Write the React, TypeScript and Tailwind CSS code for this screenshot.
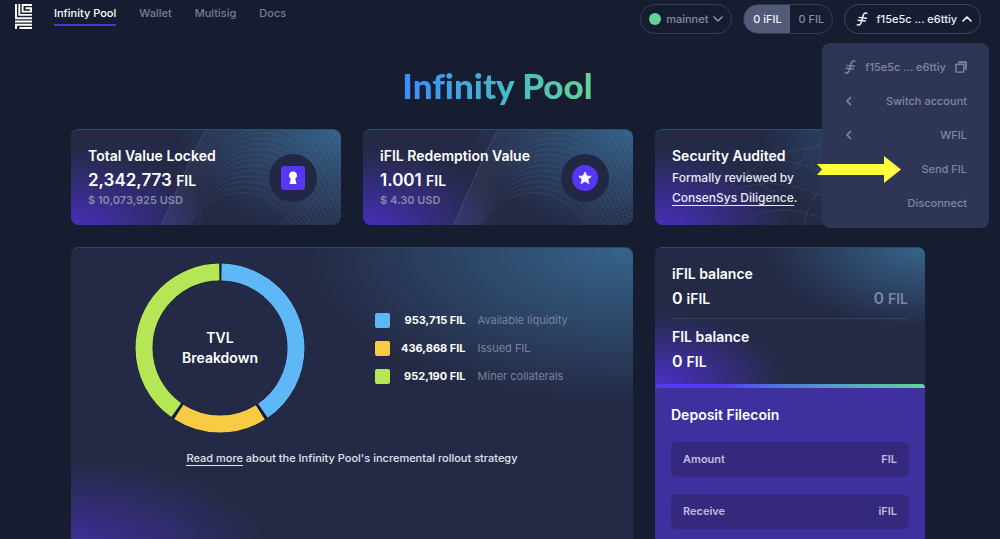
import { useId, useState, type ReactNode } from 'react'

const statBg =
  'bg-[#242a45] bg-[radial-gradient(ellipse_60%_110%_at_100%_0%,#35628a_0%,transparent_100%),radial-gradient(ellipse_50%_85%_at_0%_105%,#472fbe_0%,transparent_100%)]'
const panelBg =
  'bg-[#242a45] bg-[radial-gradient(ellipse_58%_53%_at_100%_0%,#36648b_0%,transparent_100%),radial-gradient(ellipse_35%_32%_at_0%_105%,#3f2fa0_0%,transparent_100%)]'
const balanceBg =
  'bg-[#242a45] bg-[radial-gradient(ellipse_58%_58%_at_100%_0%,#36648b_0%,transparent_100%),radial-gradient(ellipse_48%_52%_at_0%_100%,#4a30c8_0%,transparent_100%)]'

const navItems = ['Infinity Pool', 'Wallet', 'Multisig', 'Docs']

const breakdown = [
  { value: 953715, label: 'Available liquidity', color: '#5db8f5', swatch: 'bg-[#5db8f5]' },
  { value: 436868, label: 'Issued FIL', color: '#f9cb45', swatch: 'bg-[#f9cb45]' },
  { value: 952190, label: 'Miner collaterals', color: '#b4e655', swatch: 'bg-[#b4e655]' },
]

function Logo() {
  return (
    <svg viewBox="0 0 18 25" className="h-[25px] w-[18px]" fill="none" stroke="#fff" strokeWidth="1.9" aria-hidden="true">
      <path d="M1 0V14.2H17" />
      <path d="M4.3 0V10.9H17M17 1H7.6V7.6H16V4.3H10.5" />
      <path d="M0 17.5H17M1 25V20.8H17M4.5 24H17" />
    </svg>
  )
}

function FilecoinGlyph() {
  return (
    <svg viewBox="0 0 12 14" className="h-[14px] w-3 shrink-0" fill="none" stroke="currentColor" strokeWidth="1.5" strokeLinecap="round" aria-hidden="true">
      <path d="M10.8 1.2C8.8.4 7.6 1.5 7.1 3.8L5.2 10.4C4.7 12.4 3.4 13.5 1.4 12.8" />
      <path d="M3 5.4L10.4 6.2M2 8.2L9.4 9" strokeWidth="1.4" />
    </svg>
  )
}

function Chevron({ d, className }: { d: string; className: string }) {
  return (
    <svg viewBox="0 0 10 10" className={className} fill="none" stroke="currentColor" strokeWidth="1.7" strokeLinecap="round" strokeLinejoin="round" aria-hidden="true">
      <path d={d} />
    </svg>
  )
}

function CopyIcon() {
  return (
    <svg viewBox="0 0 12 12" className="h-3 w-3 shrink-0" fill="none" stroke="currentColor" strokeWidth="1.4" strokeLinejoin="round" aria-hidden="true">
      <path d="M3.2 1.1H10.9V8.8" strokeWidth="1.8" />
      <rect x=".9" y="3.2" width="7.9" height="7.9" rx=".4" />
    </svg>
  )
}

function Waves() {
  const mix = (a: number, b: number, t: number) => a + (b - a) * t
  const crests = Array.from({ length: 24 }, (_, i) => {
    const t = i / 23
    const startX = mix(90, 116, t)
    const peakX = mix(218, 172, t)
    const peakY = mix(-62, 63, t)
    const endX = mix(330, 226, t)
    const half = (peakX - startX) / 2
    return `M${startX} 97C${startX + half * 0.55} ${mix(97, peakY, 0.5)} ${peakX - half} ${peakY} ${peakX} ${peakY}S${endX - half * 0.5} ${mix(peakY, 97, 0.6)} ${endX} 99`
  })
  const ripples = Array.from({ length: 12 }, (_, i) => `M${206 + i * 4} 98Q${232 + i * 3} ${66 + i * 3} 272 ${54 + i * 4}`)
  return (
    <svg viewBox="0 0 270 96" preserveAspectRatio="xMaxYMid slice" className="absolute inset-0 h-full w-full" fill="none" stroke="#aab6dc" strokeWidth=".5" aria-hidden="true">
      {crests.map((d, i) => (
        <path key={i} d={d} opacity={i === 0 ? 0.45 : 0.2} />
      ))}
      {ripples.map((d, i) => (
        <path key={i} d={d} opacity={0.16} />
      ))}
    </svg>
  )
}

function Globe() {
  return (
    <svg viewBox="0 0 270 96" preserveAspectRatio="xMaxYMid slice" className="absolute inset-0 h-full w-full" fill="none" stroke="#9aa5cc" strokeOpacity=".28" strokeWidth=".8" strokeDasharray="1.5 1" aria-hidden="true">
      <path d="M75 58C105 30 135 14 190 18" />
      <path d="M100 32C130 28 160 36 210 60" />
      <path d="M80 60C120 46 160 58 210 90" />
      <path d="M100 86C130 74 160 84 190 98" />
      <path d="M166 13C150 24 142 36 138 44M170 56C158 66 152 80 149 96M92 40C100 52 108 58 120 62" />
    </svg>
  )
}

function StatCard({ title, value, usd, children }: { title: string; value: string; usd: string; children: ReactNode }) {
  return (
    <section className={`relative flex h-24 items-start justify-between overflow-hidden rounded-lg border-t border-[#29506c] pr-6 pl-[17px] ${statBg}`}>
      <Waves />
      <div className="relative pt-[14px] font-semibold">
        <h2 className="text-sm leading-6 text-white">{title}</h2>
        <p className="text-[17px] leading-6 text-white">
          {value} <span className="text-sm">FIL</span>
        </p>
        <p className="text-[11px] leading-4 text-[#858aa5]">$ {usd} USD</p>
      </div>
      <div className="relative grid size-12 place-items-center self-center rounded-full bg-[#222844]">{children}</div>
    </section>
  )
}

function Donut() {
  const total = breakdown.reduce((sum, item) => sum + item.value, 0)
  const radius = 76
  const length = 2 * Math.PI * radius
  const gap = 3
  let offset = 0
  return (
    <div className="relative size-[170px] shrink-0">
      <svg viewBox="0 0 170 170" className="size-full -rotate-90" fill="none" aria-hidden="true">
        <circle cx="85" cy="85" r={radius} stroke="#171c34" strokeWidth="18" />
        {breakdown.map((item) => {
          const span = (item.value / total) * length
          const start = offset
          offset += span
          return (
            <circle
              key={item.label}
              cx="85"
              cy="85"
              r={radius}
              stroke={item.color}
              strokeWidth="17"
              strokeDasharray={`${span - gap} ${length - span + gap}`}
              strokeDashoffset={-(start + gap / 2)}
            />
          )
        })}
      </svg>
      <h2 className="absolute inset-0 grid place-content-center text-center text-sm leading-5 font-semibold text-white">
        TVL
        <br />
        Breakdown
      </h2>
    </div>
  )
}

function TokenField({ label, unit }: { label: string; unit: string }) {
  const id = useId()
  return (
    <div className="flex h-[35px] items-center rounded-md bg-[#34297c] px-3 text-[11px] font-semibold text-[#c1bcdf]">
      <label htmlFor={id}>{label}</label>
      <input id={id} inputMode="decimal" className="mx-2 h-full min-w-0 flex-1 bg-transparent text-right outline-none" />
      <span>{unit}</span>
    </div>
  )
}

function AccountMenu() {
  const [open, setOpen] = useState(true)
  const row = 'relative flex h-[34px] w-full items-center justify-between gap-2 px-[22px]'
  return (
    <div className="relative">
      <button
        type="button"
        aria-expanded={open}
        onClick={() => setOpen(!open)}
        className="flex h-[30px] items-center rounded-full border border-[#3c445f] pr-2 pl-[11px] text-[11px] font-medium text-[#eef0fa]"
      >
        <FilecoinGlyph />
        <span className="mr-[5px] ml-2 whitespace-nowrap">f15e5c ... e6ttiy</span>
        <Chevron d="M1 7L5 3L9 7" className="size-[10px]" />
      </button>
      {open && (
        <div className="absolute top-[39px] -right-2 z-10 w-[167px] rounded-lg bg-[#2f3655] pt-[7px] pb-2 text-[11px] font-medium text-[#7f86a5]">
          <button type="button" className={row}>
            <FilecoinGlyph />
            <span className="whitespace-nowrap">f15e5c ... e6ttiy</span>
            <CopyIcon />
          </button>
          <button type="button" className={row}>
            <Chevron d="M6.5 1.5L3 5L6.5 8.5" className="size-[10px]" />
            Switch account
          </button>
          <button type="button" className={row}>
            <Chevron d="M6.5 1.5L3 5L6.5 8.5" className="size-[10px]" />
            WFIL
          </button>
          <button type="button" className={`${row} justify-end`}>
            <svg viewBox="0 0 84 27" className="absolute top-1 right-[88px] h-[27px] w-[84px]" aria-hidden="true">
              <path d="M0 8H67V0L84 13.5L67 27V19H0L5 13.5Z" fill="#ffff3c" />
            </svg>
            Send FIL
          </button>
          <button type="button" className={`${row} justify-end`}>
            Disconnect
          </button>
        </div>
      )}
    </div>
  )
}

export default function App() {
  return (
    <div className="flex min-h-screen flex-col overflow-hidden bg-[#161d31] font-['Inter',sans-serif] text-xs text-white">
      <header className="flex items-start justify-between pt-1 pr-[19px] pl-[15px]">
        <div className="flex items-start gap-[21px]">
          <a href="#home" aria-label="Home">
            <Logo />
          </a>
          <nav className="flex gap-[23px] text-[11px] leading-[18px] font-medium">
            {navItems.map((item, i) => (
              <a
                key={item}
                href={`#${item.toLowerCase().replace(' ', '-')}`}
                className={i === 0 ? 'border-b-2 border-[#4a35cf] pb-0.5 text-white' : 'text-[#757d96]'}
              >
                {item}
              </a>
            ))}
          </nav>
        </div>
        <div className="flex gap-[11px]">
          <button type="button" className="flex h-[30px] items-center gap-[5px] rounded-full border border-[#343c56] px-2 text-[11px] font-medium text-[#858ca6]">
            <span className="size-3 rounded-full bg-[#62d497]" />
            mainnet
            <Chevron d="M1 3L5 7L9 3" className="size-[10px]" />
          </button>
          <div className="flex h-[30px] overflow-hidden rounded-full border border-[#343c56] text-[11px] font-medium">
            <button type="button" className="w-[46px] bg-[#525a78] text-[#f1f2fa]">
              0 iFIL
            </button>
            <button type="button" className="w-[42px] text-[#858ca6]">
              0 FIL
            </button>
          </div>
          <AccountMenu />
        </div>
      </header>

      <main className="flex flex-1 flex-col pr-[75px] pl-[71px]">
        <h1 className="mx-auto mt-[30px] mb-[23px] bg-linear-to-r from-[#3c8cff] to-[#62d68e] bg-clip-text pr-px font-['Lato',sans-serif] text-[35px] leading-[42px] font-black text-transparent [font-variant-ligatures:none]">
          Infinity Pool
        </h1>

        <div className="grid flex-1 grid-cols-3 grid-rows-[auto_1fr] gap-[22px]">
          <StatCard title="Total Value Locked" value="2,342,773" usd="10,073,925">
            <svg viewBox="0 0 24 24" className="size-6" aria-hidden="true">
              <rect width="24" height="24" rx="3" fill="#5538f5" />
              <path d="M12 5.5A4 4 0 0 0 9.8 12.8L8.5 18H15.5L14.2 12.8A4 4 0 0 0 12 5.5Z" fill="#fff" />
            </svg>
          </StatCard>
          <StatCard title="iFIL Redemption Value" value="1.001" usd="4.30">
            <svg viewBox="0 0 26 26" className="size-[26px]" aria-hidden="true">
              <circle cx="13" cy="13" r="13" fill="#5538f5" />
              <path d="M13 7L14.8 11L19.2 11.4L15.9 14.3L16.9 18.6L13 16.3L9.1 18.6L10.1 14.3L6.8 11.4L11.2 11Z" fill="#fff" stroke="#fff" strokeWidth=".8" strokeLinejoin="round" />
            </svg>
          </StatCard>
          <section className={`relative h-24 overflow-hidden rounded-lg border-t border-[#29506c] pl-[17px] ${statBg}`}>
            <Globe />
            <div className="relative pt-[14px]">
              <h2 className="text-sm leading-6 font-semibold">Security Audited</h2>
              <p className="text-xs leading-5 font-medium text-[#e6e8f3]">
                Formally reviewed by
                <br />
                <a href="#audit" className="border-b border-[#e6e8f3]">
                  ConsenSys Diligence
                </a>
                .
              </p>
            </div>
          </section>

          <section className={`col-span-2 rounded-t-lg border-t border-[#29486a] pt-[15px] ${panelBg}`}>
            <div className="flex items-center gap-[70px] pl-16">
              <Donut />
              <table className="text-[11px]">
                <tbody>
                  {breakdown.map((item) => (
                    <tr key={item.label} className="h-7">
                      <td>
                        <span className={`block size-[15px] rounded-[2px] ${item.swatch}`} />
                      </td>
                      <td className="pr-3 pl-[11px] text-right font-bold">{item.value.toLocaleString('en-US')} FIL</td>
                      <td className="text-[#7b829e]">{item.label}</td>
                    </tr>
                  ))}
                </tbody>
              </table>
            </div>
            <p className="mt-4 text-center text-[11px] leading-[18px] font-medium text-[#e0e2ee]">
              <a href="#rollout" className="border-b border-[#e0e2ee]">
                Read more
              </a>{' '}
              about the Infinity Pool's incremental rollout strategy
            </p>
          </section>

          <section className="flex flex-col overflow-hidden rounded-t-lg bg-[#3f309f]">
            <div className={`border-t border-[#29506c] px-[17px] pt-[14px] pb-[11px] font-semibold ${balanceBg}`}>
              <h2 className="text-sm leading-6">iFIL balance</h2>
              <p className="flex justify-between text-base leading-6">
                <span>
                  0 <span className="text-sm">iFIL</span>
                </span>
                <span className="text-[#7d84a3]">
                  0 <span className="text-sm">FIL</span>
                </span>
              </p>
              <hr className="mt-2 mb-[6px] border-[#34425f]" />
              <h2 className="text-sm leading-6">FIL balance</h2>
              <p className="text-base leading-6">
                0 <span className="text-sm">FIL</span>
              </p>
            </div>
            <div className="h-1 rounded-t-sm bg-linear-to-r from-[#5538f5] from-25% to-[#62d68e]" />
            <form className="flex flex-col gap-[17px] px-4 pt-[17px] pb-[10px]">
              <h2 className="text-sm leading-5 font-semibold">Deposit Filecoin</h2>
              <TokenField label="Amount" unit="FIL" />
              <TokenField label="Receive" unit="iFIL" />
            </form>
          </section>
        </div>
      </main>
    </div>
  )
}
